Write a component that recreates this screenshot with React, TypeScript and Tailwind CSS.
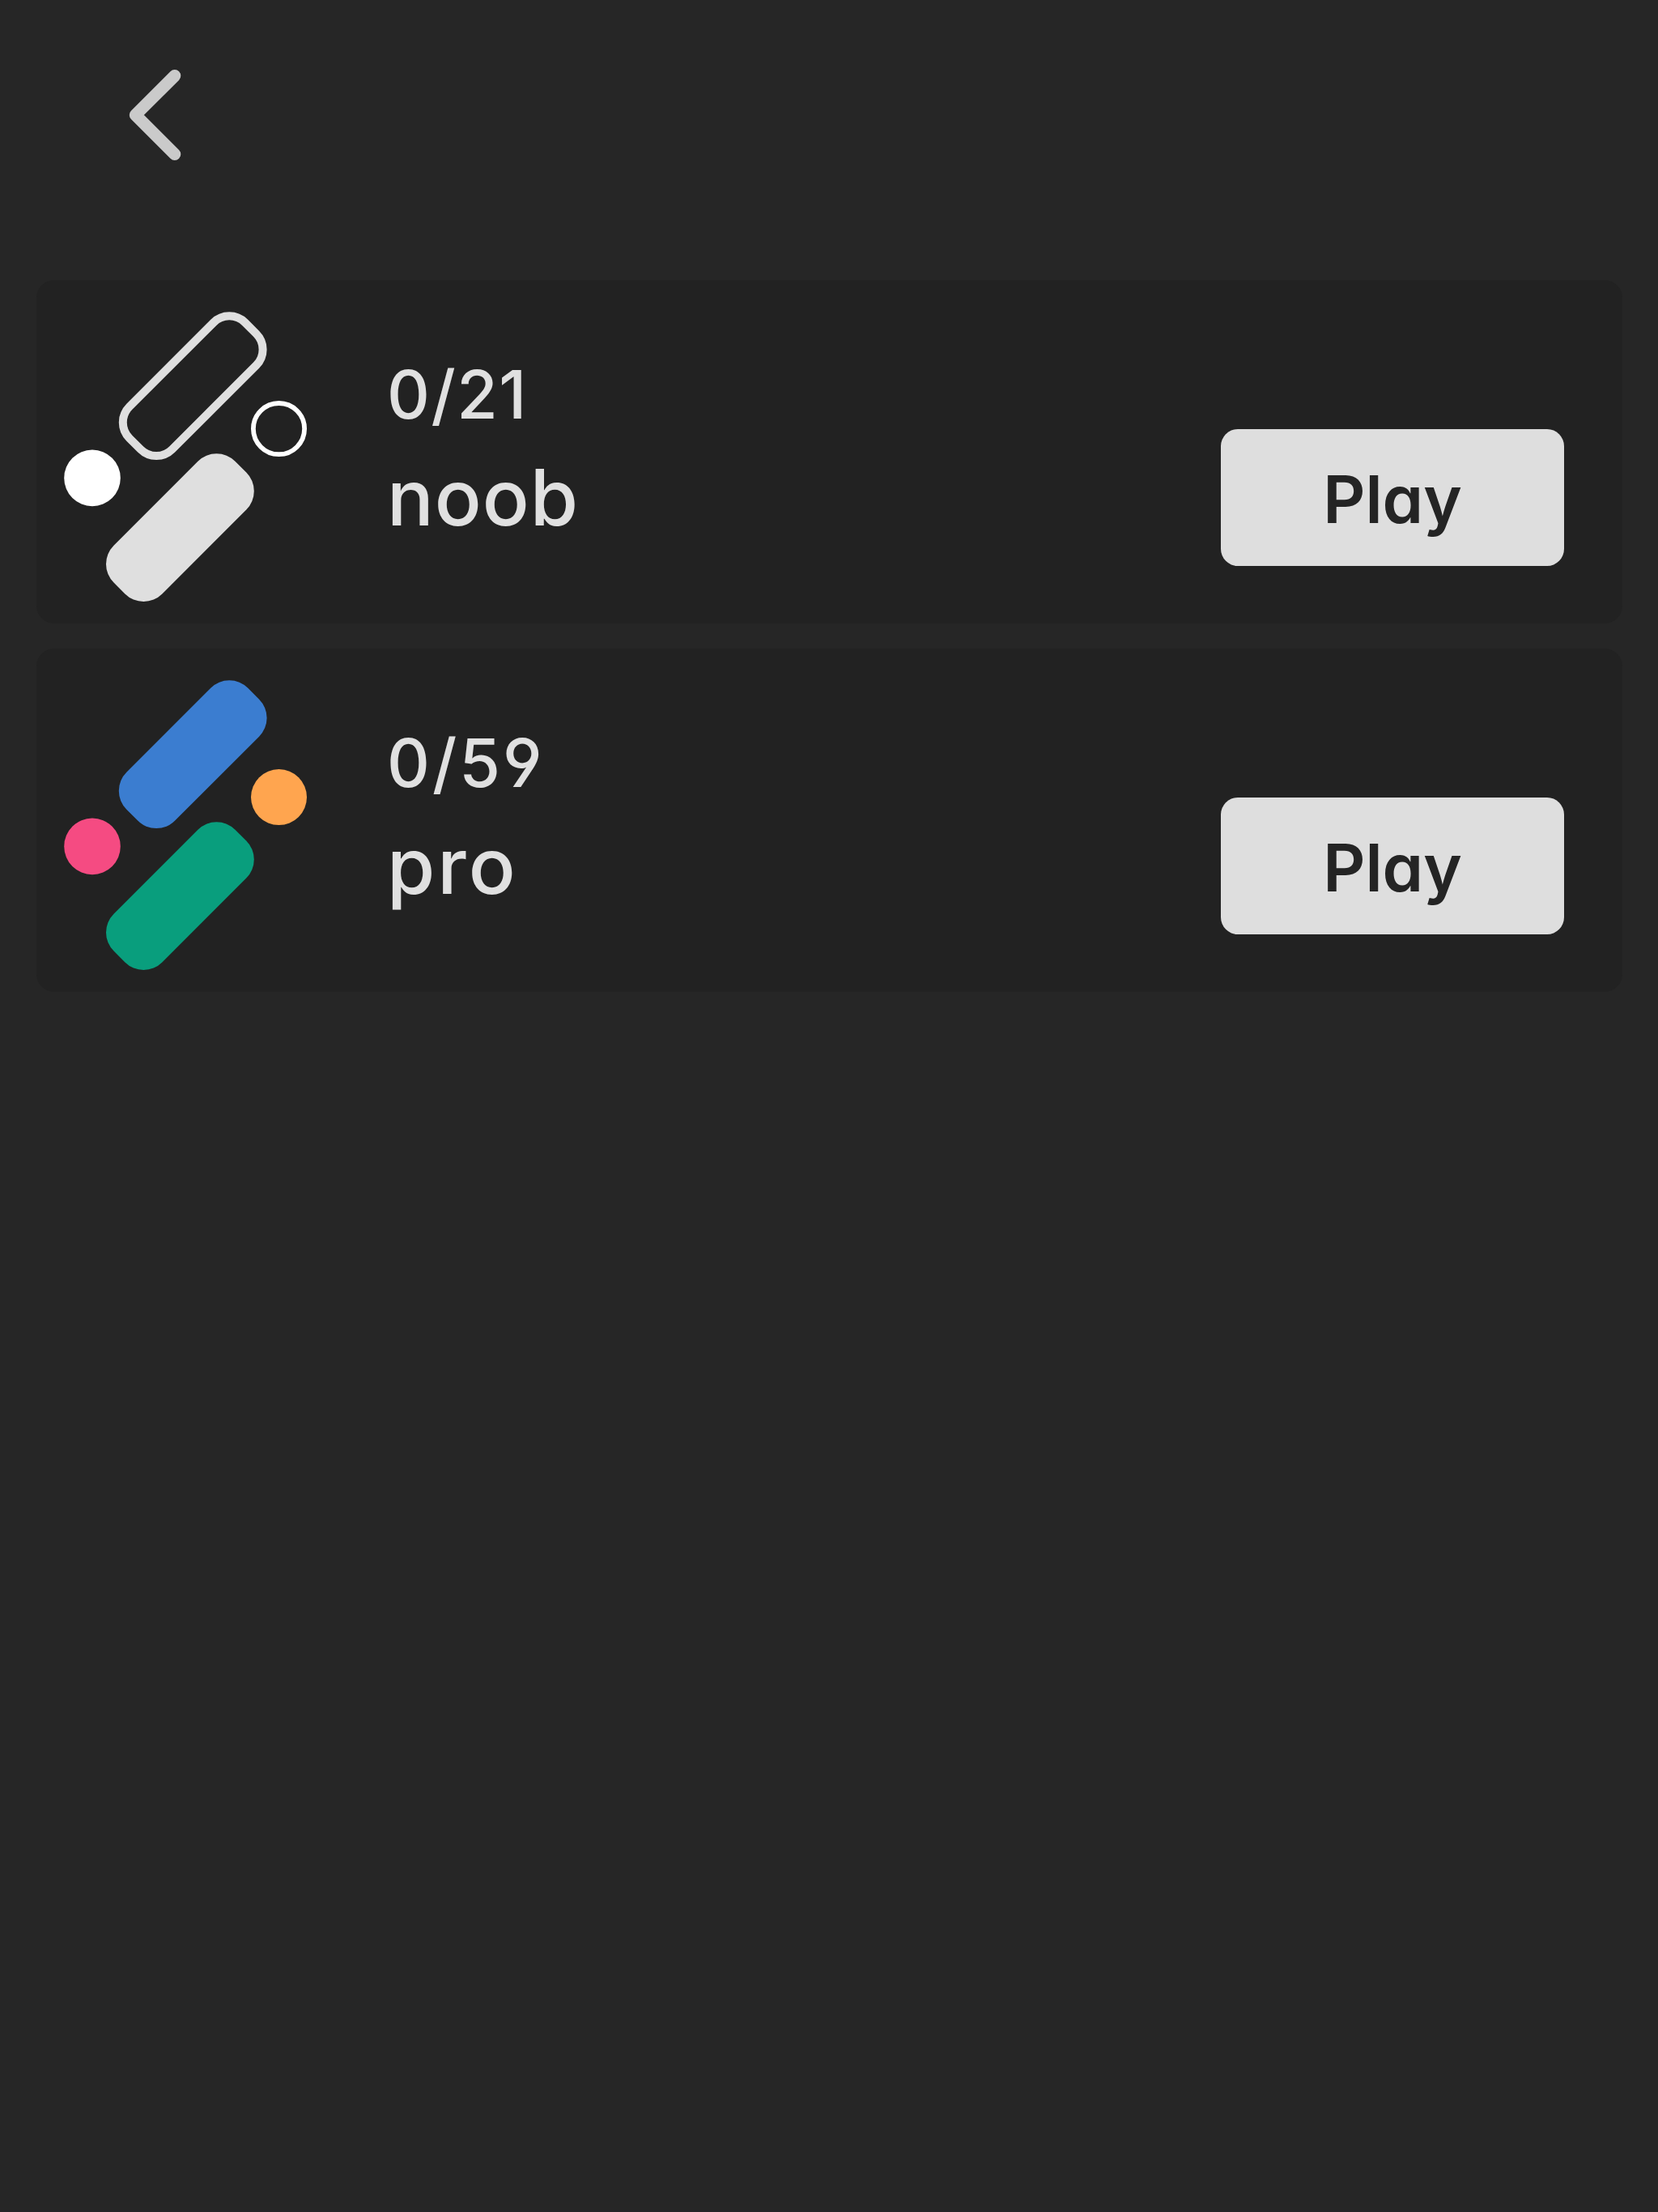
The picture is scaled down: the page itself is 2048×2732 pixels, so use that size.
type Pack = {
  name: string;
  progress: string;
  outlined: boolean;
  topBar: string;
  bottomBar: string;
  leftDot: string;
  rightDot: string;
  nameSpacing: string;
  progressSpacing: string;
};

const packs: Pack[] = [
  {
    name: "noob",
    progress: "0/21",
    outlined: true,
    topBar: "#dfdfdf",
    bottomBar: "#dfdfdf",
    leftDot: "#ffffff",
    rightDot: "#ffffff",
    nameSpacing: "tracking-[1px]",
    progressSpacing: "tracking-[1.5px]",
  },
  {
    name: "pro",
    progress: "0/59",
    outlined: false,
    topBar: "#3b7dd0",
    bottomBar: "#099e7d",
    leftDot: "#f54b82",
    rightDot: "#ffa54f",
    nameSpacing: "tracking-[3px]",
    progressSpacing: "tracking-[3px]",
  },
];

function PackIcon({ pack }: { pack: Pack }) {
  return (
    <svg className="h-[424px] w-[345px] shrink-0" viewBox="0 0 345 424" fill="none">
      {pack.outlined ? (
        <rect x="-101" y="-37.3" width="202" height="74.6" rx="27.5" stroke={pack.topBar} strokeWidth="10" transform="translate(193.2 130.7) rotate(-45)" />
      ) : (
        <rect x="-106" y="-42.3" width="212" height="84.6" rx="32.5" fill={pack.topBar} transform="translate(193.2 130.7) rotate(-45)" />
      )}
      <rect x="-106" y="-42.3" width="212" height="84.6" rx="32.5" fill={pack.bottomBar} transform="translate(177.4 305.6) rotate(-45)" />
      <circle cx="69" cy="244.4" r="34.8" fill={pack.leftDot} />
      {pack.outlined ? (
        <circle cx="299.5" cy="183.6" r="31.6" stroke={pack.rightDot} strokeWidth="5.8" />
      ) : (
        <circle cx="299.5" cy="183.6" r="34.5" fill={pack.rightDot} />
      )}
    </svg>
  );
}

function PackCard({ pack }: { pack: Pack }) {
  return (
    <section className="flex h-[424px] w-[1959px] items-start rounded-[22px] bg-[#222222]">
      <PackIcon pack={pack} />
      <div className="ml-[88px] flex flex-1 flex-col gap-[16px] pt-[92px] text-[#e0e0e0]">
        <p className={`text-[82px] leading-[100px] font-medium [font-feature-settings:'cv04','ss01'] ${pack.progressSpacing}`}>{pack.progress}</p>
        <h2 className={`text-[96px] leading-[120px] font-medium ${pack.nameSpacing}`}>{pack.name}</h2>
      </div>
      <button className="mt-[184px] mr-[72px] flex h-[169px] w-[424px] items-center justify-center rounded-[21px] bg-[#dedede] pt-[5px] text-[81px] leading-[100px] font-semibold text-[#242424] [font-feature-settings:'cv11']">
        Play
      </button>
    </section>
  );
}

export default function App() {
  return (
    <main className="flex h-[2732px] w-[2048px] flex-col bg-[#262626] font-['Inter',sans-serif]">
      <header className="h-[346px] pt-[77px] pl-[150px]">
        <button aria-label="Back" className="block">
          <svg className="h-[130px] w-[82px]" viewBox="150 77 82 130" fill="none" stroke="#cacaca" strokeWidth="15" strokeLinecap="round" strokeLinejoin="round">
            <path d="M215.8 93.6 167.3 142l48.5 48.5" />
          </svg>
        </button>
      </header>
      <div className="flex flex-col gap-[31px] pl-[45px]">
        {packs.map((pack) => (
          <PackCard key={pack.name} pack={pack} />
        ))}
      </div>
    </main>
  );
}
